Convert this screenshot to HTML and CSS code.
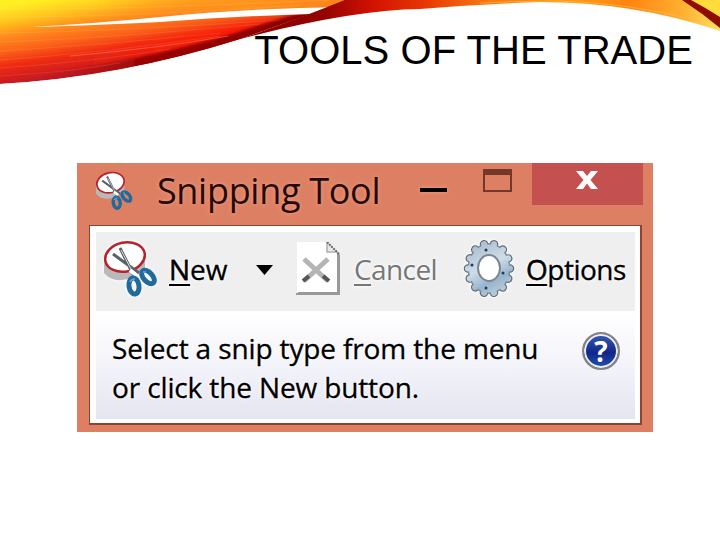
FILE: index.html
```html
<!DOCTYPE html>
<html lang="en">
<head>
<meta charset="UTF-8">
<meta name="viewport" content="width=device-width, initial-scale=1.0">
<title>Tools of the Trade</title>
<link rel="stylesheet" href="styles.css">
</head>
<body>

<div class="slide">
  <svg class="swoosh" width="720" height="90" viewBox="0 0 720 90">
    <defs>
      <linearGradient id="flame" gradientUnits="userSpaceOnUse" x1="70" y1="-4" x2="84" y2="84">
        <stop offset="0" stop-color="#ffee22"/>
        <stop offset=".16" stop-color="#ffc81e"/>
        <stop offset=".34" stop-color="#ff8a1c"/>
        <stop offset=".5" stop-color="#fb6418"/>
        <stop offset=".66" stop-color="#f02c10"/>
        <stop offset=".84" stop-color="#cc1a1e"/>
        <stop offset="1" stop-color="#9e1010"/>
      </linearGradient>
      <linearGradient id="red" x1="0" y1="0" x2="1" y2="0">
        <stop offset="0" stop-color="#ff2000" stop-opacity="0"/>
        <stop offset=".65" stop-color="#ff1800"/>
        <stop offset="1" stop-color="#e80c00"/>
      </linearGradient>
      <linearGradient id="dark" x1="0" y1="0" x2="1" y2="0">
        <stop offset="0" stop-color="#c83038" stop-opacity="0"/>
        <stop offset=".35" stop-color="#980404"/>
        <stop offset=".75" stop-color="#8a0000"/>
        <stop offset="1" stop-color="#b00c00"/>
      </linearGradient>
      <linearGradient id="amber" x1="0" y1="0" x2="1" y2="0">
        <stop offset="0" stop-color="#ff9a1c" stop-opacity="0"/>
        <stop offset=".6" stop-color="#ff9a1c" stop-opacity=".8"/>
        <stop offset="1" stop-color="#ff8418"/>
      </linearGradient>
      <linearGradient id="arc" gradientUnits="userSpaceOnUse" x1="260" y1="0" x2="720" y2="0">
        <stop offset="0" stop-color="#8a0000"/>
        <stop offset=".14" stop-color="#940400"/>
        <stop offset=".24" stop-color="#d01000"/>
        <stop offset=".36" stop-color="#e83804"/>
        <stop offset=".5" stop-color="#fa7a10"/>
        <stop offset=".68" stop-color="#ff9a18"/>
        <stop offset=".8" stop-color="#ff8410"/>
        <stop offset=".92" stop-color="#ffb030"/>
        <stop offset="1" stop-color="#ffe060"/>
      </linearGradient>
      <clipPath id="wing"><path d="M0 0H350L240 39Q120 77 0 84Z"/></clipPath>
      <filter id="soft" x="-10%" y="-20%" width="120%" height="140%"><feGaussianBlur stdDeviation="4"/></filter>
      <filter id="edge" x="-10%" y="-20%" width="120%" height="140%"><feGaussianBlur stdDeviation="1.5"/></filter>
    </defs>
    <g clip-path="url(#wing)">
      <path fill="url(#flame)" d="M0 0H350L240 39Q120 77 0 84Z"/>
      <path fill="url(#red)" filter="url(#soft)" d="M70 60Q170 34 320 18L250 44Q150 66 70 72Z"/>
      <path fill="url(#dark)" filter="url(#edge)" d="M0 80Q130 64 232 34Q300 12 345 0H410Q340 12 240 42Q120 82 0 90Z"/>
      <path fill="url(#amber)" d="M100 0H345L328 7Q220 9 100 23Z"/>
      <g fill="none" stroke="#fff" stroke-opacity=".1">
        <path d="M0 9Q120 10 330 0M0 17Q130 17 300 5M0 33Q120 31 280 20M0 42Q110 38 260 24"/>
        <path d="M0 51Q100 45 220 33M0 60Q110 52 220 36M0 68Q90 62 170 49M0 76Q70 72 120 63"/>
      </g>
      <path fill="none" stroke="#ff8c78" stroke-opacity=".5" d="M70 56Q160 48 228 36"/>
    </g>
    <path fill="#fff" d="M32 27Q100 23 160 17Q240 9 330 7L312 14Q240 16 160 22Q80 26 32 27Z"/>
    <path fill="url(#arc)" d="M345 0H690L720 20V31Q635 2 540 2Q480 4 420 9Q350 10 240 39Q290 22 345 0Z"/>
    <path fill="none" stroke="#ffc050" stroke-opacity=".6" d="M480 3Q520 1 560 1Q630 3 700 21"/>
    <path fill="#ffdc3c" d="M688 0H720V18Z"/>
    <path fill="#8e0c00" d="M682 0H691Q706 8 720 17V28Q702 13 682 0Z"/>
  </svg>

  <h1 class="title">TOOLS OF THE TRADE</h1>

  <div class="window">
    <div class="titlebar">
      <svg class="app-icon" width="38" height="40" viewBox="0 0 54 58">
        <use href="#snip"/>
      </svg>
      <span class="app-name">Snipping Tool</span>
      <span class="minimize"></span>
      <span class="maximize"></span>
      <span class="close">
        <svg width="22" height="18" viewBox="0 0 22 18"><path d="M0 0H7L11 5L15 0H22L14.500 9L22 18H15L11 12.500L7 18H0L7.500 9Z" fill="#fff"/></svg>
      </span>
    </div>

    <div class="content">
      <div class="toolbar">
        <svg class="snip-icon" width="54" height="58" viewBox="0 0 54 58">
          <g id="snip">
            <path d="M1 20V33Q9 43 25 39L42 28V14Z" fill="#b9b9b9"/>
            <ellipse cx="22" cy="17" rx="20" ry="14.500" transform="rotate(-12 22 17)" fill="#fff" stroke="#b8222c" stroke-width="2.500"/>
            <path d="M17 8L31 36M10 14L36 33" stroke="#59616a" stroke-width="3"/>
            <path d="M18 10L30 33" stroke="#d8dde2" stroke-width="1"/>
            <path d="M27 30L33 35" stroke="#fff" stroke-width="4"/>
            <ellipse cx="31" cy="46" rx="5" ry="8" transform="rotate(-8 31 46)" fill="none" stroke="#236a9c" stroke-width="5"/>
            <ellipse cx="45" cy="37" rx="4.500" ry="8" transform="rotate(-42 45 37)" fill="none" stroke="#236a9c" stroke-width="5"/>
            <path d="M27 42Q28 39 32 39M40 32L43 32" fill="none" stroke="#63a9d4" stroke-width="1.500"/>
          </g>
        </svg>
        <span class="label new"><u>N</u>ew</span>
        <svg class="arrow" width="17" height="10" viewBox="0 0 17 10"><path d="M0 0H17L8.500 10Z"/></svg>
        <svg class="cancel-icon" width="47" height="54" viewBox="0 0 47 54">
          <path d="M3 1H33L45 13V53H1V51H3Z" fill="#999"/>
          <path d="M2 0H32L42 11V50H2Z" fill="#fff"/>
          <path d="M32 0V10H42" fill="#e8e8e8" stroke="#b0b0b0" stroke-width="1.500"/>
          <path d="M32 0L44 12" stroke="#666" stroke-width="2" stroke-dasharray="2 1"/>
          <path d="M9 17L33 39M33 17L9 39" stroke="#b4b4b4" stroke-width="5"/>
          <path d="M8 39L14 34M28 34L34 39" stroke="#555" stroke-width="4"/>
        </svg>
        <span class="label cancel"><u>C</u>ancel</span>
        <svg class="gear" width="52" height="60" viewBox="0 0 52 60">
          <defs>
            <linearGradient id="steel" gradientUnits="userSpaceOnUse" x1="5" y1="0" x2="35" y2="58">
              <stop offset="0" stop-color="#9fb3c6"/>
              <stop offset=".5" stop-color="#cfdde8"/>
              <stop offset=".75" stop-color="#98b5ce"/>
              <stop offset="1" stop-color="#c3d0da"/>
            </linearGradient>
          </defs>
          <g fill="none" stroke-linecap="round">
            <ellipse cx="26" cy="29.500" rx="21" ry="25" pathLength="140" stroke="#5f6e7b" stroke-width="8.500" stroke-dasharray=".1 9.900"/>
            <ellipse cx="26" cy="29.500" rx="20.500" ry="24.500" stroke="#7c8c9a" stroke-width="2"/>
            <ellipse cx="26" cy="29.500" rx="21" ry="25" pathLength="140" stroke="url(#steel)" stroke-width="6" stroke-dasharray=".1 9.900"/>
          </g>
          <ellipse cx="26" cy="29.500" rx="20" ry="24" fill="url(#steel)"/>
          <ellipse cx="26" cy="29" rx="11" ry="13" fill="#fff" stroke="#7c8791" stroke-width="2"/>
          <g fill="#153d68"><circle cx="23" cy="11" r="1.500"/><circle cx="9" cy="26" r="1.500"/><circle cx="40" cy="34" r="1.500"/><circle cx="23" cy="49" r="1.500"/></g>
        </svg>
        <span class="label options"><u>O</u>ptions</span>
      </div>

      <div class="message">
        <p class="hint">Select a snip type from the menu<br>or click the New button.</p>
        <span class="help">?</span>
      </div>
    </div>
  </div>
</div>

</body>
</html>
```
FILE: styles.css
```css
body {
  margin: 0;
  background: #fff;
}
.slide {
  position: relative;
  width: 720px;
  height: 540px;
  overflow: hidden;
}
.swoosh {
  position: absolute;
  top: 0;
  left: 0;
}
.title {
  position: relative;
  height: 46px;
  margin: 0;
  padding: 27px 27px 90px 0;
  font: 40px/46px "Liberation Sans", sans-serif;
  letter-spacing: 0.05px;
  text-align: right;
  white-space: nowrap;
}
.window {
  box-sizing: border-box;
  width: 576px;
  height: 269px;
  margin-left: 77px;
  padding: 0 10px 0 12px;
  background: #dd7f63;
  font-family: "Open Sans", sans-serif;
}
.titlebar {
  display: flex;
  align-items: flex-start;
  height: 62px;
}
.app-icon {
  margin: 8px 0 0 6px;
}
.app-name {
  width: 264px;
  margin: 4px 0 0 24px;
  font-size: 36px;
  line-height: 48px;
  letter-spacing: -0.3px;
  color: #230a06;
  white-space: nowrap;
  text-shadow: 0 0 4px #f0a088;
}
.minimize {
  width: 27px;
  height: 4px;
  margin-top: 25px;
  background: #000;
  box-shadow: 0 0 4px #f0a088;
}
.maximize {
  box-sizing: border-box;
  width: 29px;
  height: 23px;
  margin: 6px 0 0 36px;
  border: 2px solid #74382a;
  border-top-width: 6px;
}
.close {
  box-sizing: border-box;
  width: 111px;
  height: 42px;
  margin-left: 20px;
  padding: 8px 0 0 44px;
  background: #c55050;
}
.close svg {
  display: block;
}
.content {
  box-sizing: border-box;
  width: 553px;
  height: 200px;
  padding: 6px 5px 5px 6px;
  border: 1px solid #8f4432;
  border-right-width: 2px;
  border-bottom-width: 2px;
  background: #fff;
}
.toolbar {
  display: flex;
  align-items: flex-start;
  height: 79px;
  background: #efefef;
}
.snip-icon {
  margin: 8px 0 0 7px;
  filter: drop-shadow(0 0 2px #fff);
}
.label {
  margin-top: 18px;
  font-size: 28px;
  line-height: 38px;
  white-space: nowrap;
  text-shadow: 0 0 3px #fff, 0 0 5px #fff;
  -webkit-text-stroke: 0.3px;
}
.label u {
  text-decoration-thickness: 2px;
  text-underline-offset: 4px;
  text-decoration-skip-ink: none;
}
.new {
  width: 75px;
  margin-left: 12px;
}
.arrow {
  margin: 33px 0 0 12px;
}
.cancel-icon {
  margin: 10px 0 0 22px;
}
.cancel {
  width: 84px;
  margin-left: 12px;
  letter-spacing: -0.6px;
  color: #777;
  -webkit-text-stroke: 0;
}
.gear {
  margin: 7px 0 0 25px;
  filter: drop-shadow(0 0 2px #fff);
}
.options {
  margin-left: 11px;
  letter-spacing: -0.5px;
}
.message {
  display: flex;
  align-items: flex-start;
  height: 108px;
  background: linear-gradient(#fff, #f3f3fa 50%, #e5e5f1);
}
.hint {
  width: 470px;
  margin: 18px 0 0 16px;
  font-size: 28px;
  line-height: 39px;
  letter-spacing: -0.13px;
  white-space: nowrap;
  text-shadow: 0 0 3px #fff, 0 0 5px #fff;
  -webkit-text-stroke: 0.3px;
}
.help {
  box-sizing: border-box;
  width: 38px;
  height: 38px;
  margin-top: 21px;
  border: 2px solid #858585;
  border-radius: 50%;
  background: linear-gradient(#3a5cb4, #10278a 55%, #2450b4);
  box-shadow: inset 0 0 0 2px #eee;
  color: #fff;
  font-size: 28px;
  font-weight: bold;
  line-height: 34px;
  text-align: center;
}
```
